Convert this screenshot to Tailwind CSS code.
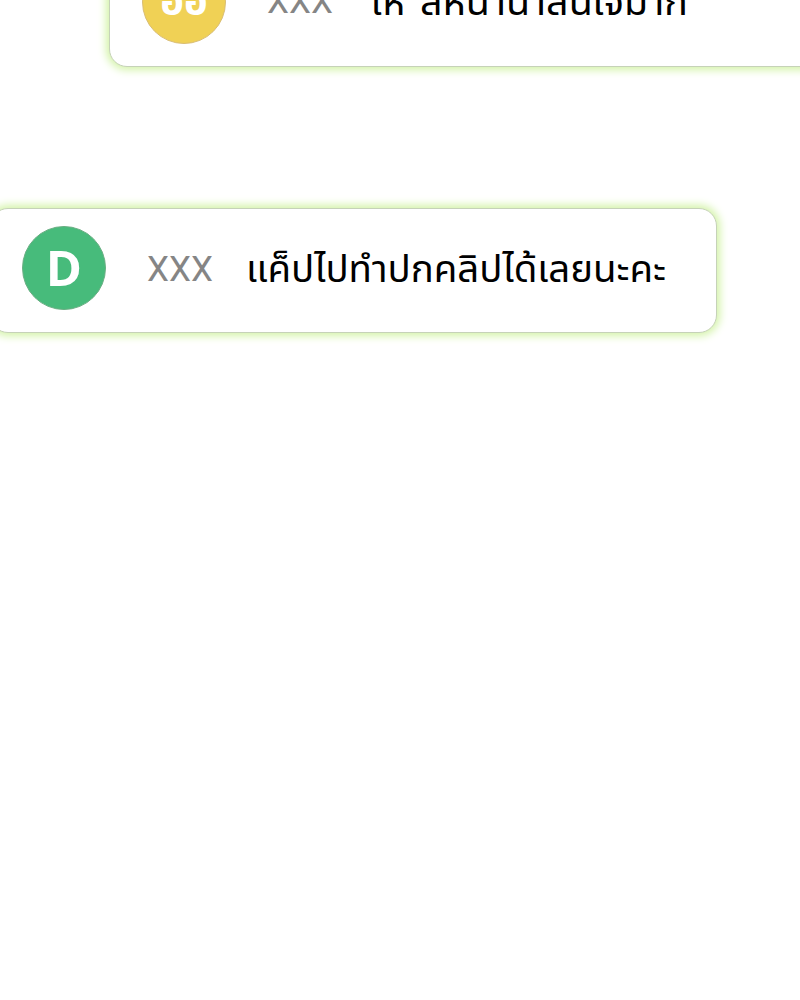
<!DOCTYPE html>
<html lang="th">
<head>
    <meta charset="UTF-8">
    <meta name="viewport" content="width=device-width, initial-scale=1.0">
    <title>Live Comments</title>
    <script src="https://cdn.jsdelivr.net/npm/@tailwindcss/browser@4"></script>
</head>
<body class="bg-white">
    <main class="w-full h-screen overflow-hidden flex flex-col items-start font-['Noto_Sans_Thai','Noto_Sans',sans-serif]">

        <!-- Comment, scrolled partly off the top -->
        <div class="flex items-center shrink-0 w-[730px] h-[124px] -mt-[57px] ml-[109px] pl-8 pb-[7px] bg-white border border-[#c6d2b8] rounded-[18px] shadow-[0_0_8px_3px_#d3f3a8]">
            <div class="w-[84px] h-[84px] shrink-0 rounded-full bg-[#f0d155] border border-[#d9bd74] flex items-center justify-center text-white text-[40px] font-bold">
                <span class="whitespace-nowrap">ออ</span>
            </div>
            <span class="ml-[41px] mt-[2px] w-[105px] shrink-0 text-[35px] text-[#858585] font-[Roboto,sans-serif]">XXX</span>
            <svg class="shrink-0 overflow-visible" width="316" height="60" viewBox="0 0 316 60">
                <text x="-1" y="43" textLength="34" lengthAdjust="spacingAndGlyphs" font-size="38">ให้</text>
                <text x="48" y="43" textLength="268" lengthAdjust="spacingAndGlyphs" font-size="38">สีหน้าน่าสนใจมาก</text>
            </svg>
        </div>

        <!-- Comment, running off the left edge -->
        <div class="flex items-center shrink-0 w-[727px] h-[125px] mt-[141px] -ml-[10px] pl-[31px] bg-white border border-[#c6d2b8] rounded-[18px] shadow-[0_0_8px_3px_#d3f3a8]">
            <div class="w-[84px] h-[84px] -mt-[6px] shrink-0 rounded-full bg-[#47bb7b] border border-[#6aae83] flex items-center justify-center text-white text-[49px] font-bold font-['Open_Sans',sans-serif]">D</div>
            <span class="ml-[41px] w-[100px] shrink-0 text-[35px] text-[#858585] font-[Roboto,sans-serif]">XXX</span>
            <svg class="shrink-0 overflow-visible" width="420" height="60" viewBox="0 0 420 60">
                <text x="-1" y="41" textLength="420" lengthAdjust="spacingAndGlyphs" font-size="38">แค็ปไปทำปกคลิปได้เลยนะคะ</text>
            </svg>
        </div>

    </main>
</body>
</html>
